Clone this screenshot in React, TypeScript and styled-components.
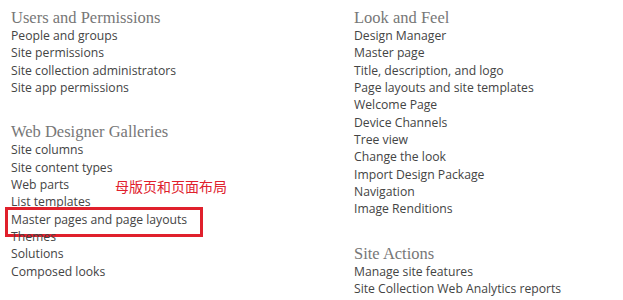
import styled, { createGlobalStyle } from "styled-components";

const GlobalStyle = createGlobalStyle`
  html, body {
    margin: 0;
    padding: 0;
    background: #fff;
  }
`;

const Page = styled.div`
  display: grid;
  grid-template-columns: 343px 1fr;
  padding: 9px 0 0 11px;
  font-family: "Open Sans", "Noto Sans", sans-serif;
  color: #444;
`;

const Column = styled.div`
  display: flex;
  flex-direction: column;
  gap: 27px;
`;

const Section = styled.section`
  display: flex;
  flex-direction: column;
`;

const Heading = styled.h2`
  margin: 0;
  font-family: "Liberation Serif", "DejaVu Serif", serif;
  font-weight: normal;
  font-size: 16.5px;
  line-height: 18px;
  color: #777;
`;

const List = styled.ul`
  list-style: none;
  margin: 0;
  padding: 0;
`;

const Item = styled.li<{ $marked?: boolean }>`
  position: relative;
  font-size: 12.2px;
  line-height: 17.33px;
  white-space: nowrap;

  ${(p) =>
    p.$marked &&
    `
    &::after {
      content: "";
      position: absolute;
      left: -6px;
      top: -4px;
      width: 198px;
      height: 30px;
      box-sizing: border-box;
      border: 3px solid #e0202c;
    }
  `}
`;

const Note = styled.span`
  position: absolute;
  left: 104px;
  top: -34px;
  font-family: "Noto Sans CJK SC", sans-serif;
  font-size: 14px;
  line-height: 18px;
  color: #e0202c;
`;

type Group = { title: string; items: string[] };

const left: Group[] = [
  {
    title: "Users and Permissions",
    items: [
      "People and groups",
      "Site permissions",
      "Site collection administrators",
      "Site app permissions",
    ],
  },
  {
    title: "Web Designer Galleries",
    items: [
      "Site columns",
      "Site content types",
      "Web parts",
      "List templates",
      "Master pages and page layouts",
      "Themes",
      "Solutions",
      "Composed looks",
    ],
  },
];

const right: Group[] = [
  {
    title: "Look and Feel",
    items: [
      "Design Manager",
      "Master page",
      "Title, description, and logo",
      "Page layouts and site templates",
      "Welcome Page",
      "Device Channels",
      "Tree view",
      "Change the look",
      "Import Design Package",
      "Navigation",
      "Image Renditions",
    ],
  },
  {
    title: "Site Actions",
    items: ["Manage site features", "Site Collection Web Analytics reports"],
  },
];

function Groups({ groups }: { groups: Group[] }) {
  return (
    <Column>
      {groups.map((g) => (
        <Section key={g.title}>
          <Heading>{g.title}</Heading>
          <List>
            {g.items.map((it) => {
              const marked = it === "Master pages and page layouts";
              return (
                <Item key={it} $marked={marked}>
                  {it}
                  {marked && <Note>母版页和页面布局</Note>}
                </Item>
              );
            })}
          </List>
        </Section>
      ))}
    </Column>
  );
}

export default function App() {
  return (
    <>
      <GlobalStyle />
      <Page>
        <Groups groups={left} />
        <Groups groups={right} />
      </Page>
    </>
  );
}
